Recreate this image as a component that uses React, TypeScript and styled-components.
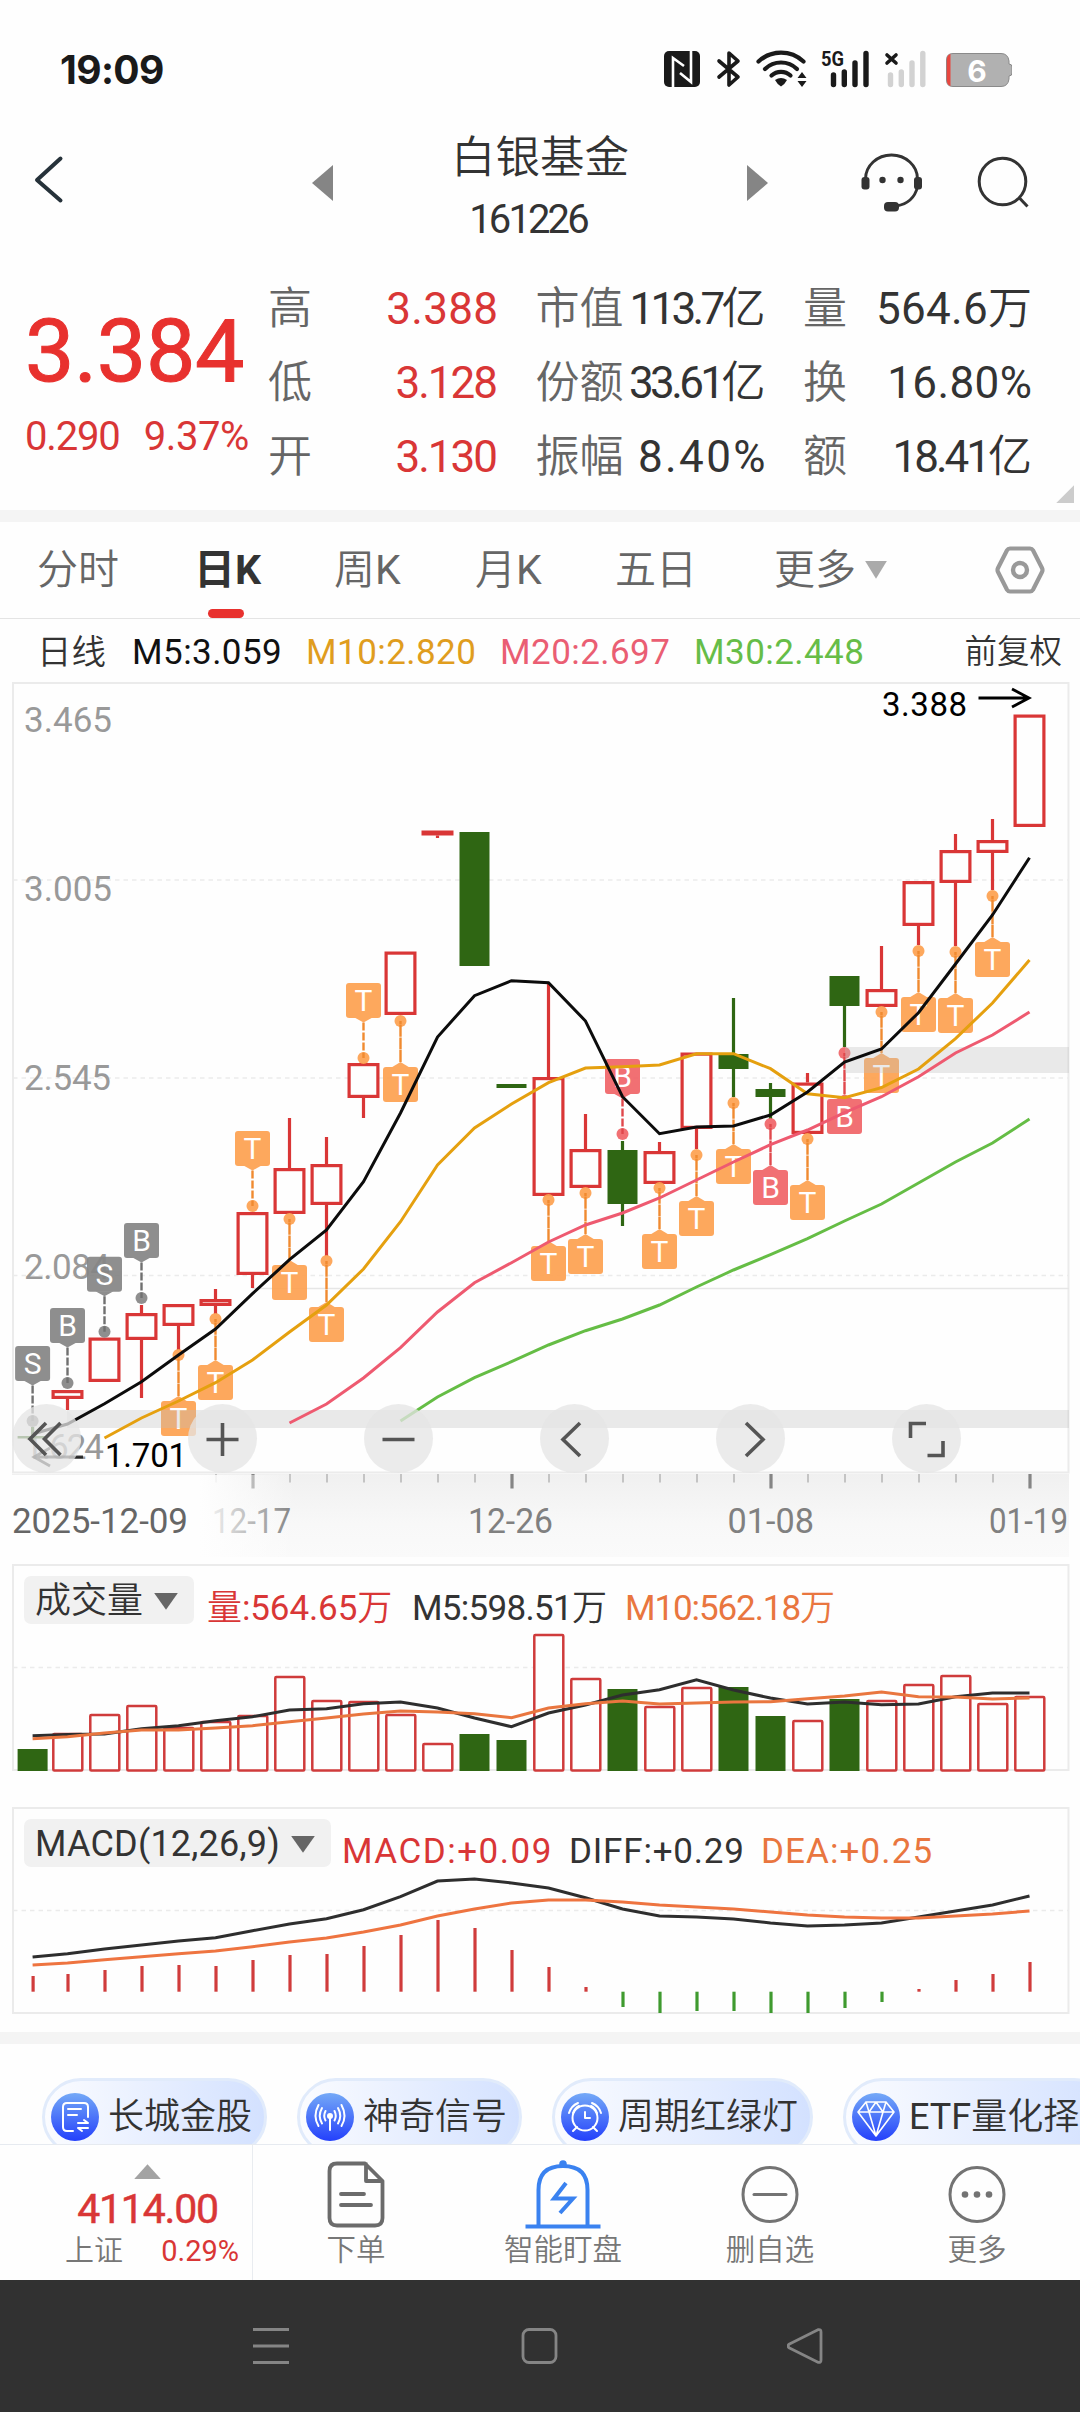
import React from "react";
import styled, { createGlobalStyle } from "styled-components";

const FONT = `Roboto, "Noto Sans CJK SC", sans-serif`;
const RED = "#d93636";
const GREEN = "#2f6613";
const PAPER = "#fefefe";

const GlobalStyle = createGlobalStyle`
  * { box-sizing: border-box; }
  body { margin: 0; background: ${PAPER}; font-family: ${FONT}; }
  svg { display: block; flex: none; }
`;

/* ---------- data ---------- */

type Candle = { up: boolean; top: number; bottom: number; high?: number; low?: number };
const up = (top: number, bottom: number, high?: number, low?: number): Candle => ({ up: true, top, bottom, high, low });
const down = (top: number, bottom: number, high?: number, low?: number): Candle => ({ up: false, top, bottom, high, low });

const candles: Candle[] = [
  down(1436, 1438.5, 1427, 1441), up(1390, 1399, undefined, 1410), up(1337.5, 1382), up(1313, 1340, 1305, 1398),
  up(1304, 1326, undefined, 1350), up(1299, 1306, 1289, 1314), up(1212, 1275, undefined, 1288), up(1168, 1214, 1118),
  up(1164, 1205, 1137, 1256), up(1063, 1098, undefined, 1118), up(951.5, 1015), up(830.5, 835.5, undefined, 838),
  down(832, 966), down(1084, 1088), up(1077, 1196, 983), up(1149, 1188, 1114),
  down(1150, 1204, 1141, 1226), up(1151, 1184, 1142), up(1052.5, 1129, undefined, 1149), down(1054, 1069, 998, 1097),
  down(1089, 1097, 1083, 1119), up(1082.5, 1134, 1073), down(976, 1006, undefined, 1047), up(989, 1007, 946),
  up(881, 926, undefined, 945), up(850, 883, 834, 946), up(840, 853, 819, 890), up(714.5, 827),
];

type Mark = { i: number; dot: number; text: "T" | "B" | "S"; above?: boolean; tone: "o" | "r" | "g" };
const marks: Mark[] = [
  { i: 0, dot: 1421, text: "S", above: true, tone: "g" },
  { i: 1, dot: 1383, text: "B", above: true, tone: "g" },
  { i: 2, dot: 1331.7, text: "S", above: true, tone: "g" },
  { i: 3, dot: 1298, text: "B", above: true, tone: "g" },
  { i: 4, dot: 1355, text: "T", tone: "o" },
  { i: 5, dot: 1319, text: "T", tone: "o" },
  { i: 6, dot: 1206, text: "T", above: true, tone: "o" },
  { i: 7, dot: 1219, text: "T", tone: "o" },
  { i: 8, dot: 1261, text: "T", tone: "o" },
  { i: 9, dot: 1058, text: "T", above: true, tone: "o" },
  { i: 10, dot: 1021, text: "T", tone: "o" },
  { i: 14, dot: 1200, text: "T", tone: "o" },
  { i: 15, dot: 1193, text: "T", tone: "o" },
  { i: 16, dot: 1134, text: "B", above: true, tone: "r" },
  { i: 17, dot: 1188, text: "T", tone: "o" },
  { i: 18, dot: 1155, text: "T", tone: "o" },
  { i: 19, dot: 1103, text: "T", tone: "o" },
  { i: 20, dot: 1124, text: "B", tone: "r" },
  { i: 21, dot: 1139, text: "T", tone: "o" },
  { i: 22, dot: 1053, text: "B", tone: "r" },
  { i: 23, dot: 1012, text: "T", tone: "o" },
  { i: 24, dot: 951, text: "T", tone: "o" },
  { i: 25, dot: 952, text: "T", tone: "o" },
  { i: 26, dot: 896, text: "T", tone: "o" },
];
const tones = {
  o: { fill: "#fda150", line: "#f08a30" },
  r: { fill: "#f06468", line: "#e0484c" },
  g: { fill: "#858585", line: "#707070" },
};

const ma5 = [1434, 1424, 1403.7, 1381.7, 1355, 1329, 1293.7, 1259.7, 1230, 1181.7, 1113, 1037, 995.7, 980.7, 982.7, 1021, 1096.7, 1133.7, 1127, 1126, 1115, 1092, 1062, 1049, 1012.7, 964, 915, 857.7];
const ma10 = [1438, 1418, 1401, 1382.7, 1360, 1332, 1305, 1269, 1221.7, 1165, 1128, 1104, 1082.7, 1068, 1066.7, 1065, 1053.7, 1053.7, 1068.7, 1093.7, 1097.7, 1087.7, 1069, 1038.7, 1003, 960];
const ma20 = [1423, 1404, 1378, 1347.7, 1312, 1282.7, 1262.7, 1242, 1225, 1213, 1198, 1180, 1162, 1144.7, 1130, 1112.7, 1096.7, 1076.7, 1053, 1035, 1012];
const ma30 = [1421, 1397, 1377.7, 1361.7, 1345, 1330.7, 1319, 1305, 1287, 1270, 1254.7, 1238.7, 1221, 1204, 1183, 1162, 1143, 1119];

const volTops = [1749, 1734, 1715, 1706, 1728, 1722, 1716, 1677, 1701, 1702, 1715, 1744, 1734, 1740, 1635, 1679, 1689, 1707, 1688, 1687, 1716, 1721, 1699, 1701, 1685, 1676, 1704, 1697];
const vol5 = [1735.7, 1734.5, 1734, 1728.7, 1725.7, 1720.7, 1716.7, 1710, 1708.7, 1703.7, 1702, 1708, 1718, 1726.7, 1713, 1705, 1695, 1689.7, 1679.7, 1690, 1698, 1704, 1702, 1704.7, 1704, 1696.7, 1693, 1693];
const vol10 = [1738.7, 1736.7, 1733, 1730, 1730, 1728, 1725.7, 1721.7, 1718, 1714, 1711, 1712, 1713.7, 1717.7, 1708, 1703.7, 1701, 1704, 1703, 1702, 1701.7, 1698.7, 1696, 1692, 1696.7, 1697, 1699, 1698];

const macd = [1976, 1974, 1970, 1966, 1965, 1966, 1960, 1955, 1954, 1946, 1935, 1920, 1928, 1950, 1967, 1987, 2007, 2013, 2011, 2011, 2013, 2013, 2008, 2002, 1989, 1980, 1974, 1962];
const diff = [1957, 1953.7, 1949, 1945, 1941, 1937.7, 1930.7, 1924, 1918.7, 1909.7, 1896.7, 1881, 1879, 1883, 1888, 1897.7, 1909, 1916, 1917, 1919, 1923, 1926, 1925, 1923, 1917, 1911, 1905, 1896];
const dea = [1965, 1963, 1959.7, 1956.7, 1953.7, 1951, 1946.7, 1942, 1938, 1932, 1925, 1916, 1909, 1903, 1900, 1900, 1902, 1905, 1907, 1909, 1912, 1915, 1917, 1918, 1918, 1916, 1914, 1911];

const xAt = (i: number) => (i === 0 ? 32.6 : 30.5 + 37 * i);
const points = (ys: number[]) => ys.map((y, k) => `${xAt(k + 28 - ys.length)},${y}`).join(" ");

/* ---------- layout ---------- */

const Screen = styled.main`
  width: 1080px;
  height: 2412px;
  display: flex;
  flex-direction: column;
  overflow: hidden;
  background: ${PAPER};
  color: #333;
`;

const StatusBar = styled.div`
  height: 120px;
  padding: 18px 68px 0 60px;
  display: flex;
  align-items: center;
  justify-content: space-between;
`;
const Clock = styled.span`
  margin-top: 2px;
  font: 700 39px/46px Inter, sans-serif;
  letter-spacing: -0.6px;
  color: #1a1a1a;
`;

const Header = styled.header`
  height: 122px;
  display: grid;
  grid-template-columns: 312px 21px 414px 21px 91px 60px 1fr;
  grid-template-rows: 122px;
  align-items: center;
`;
const BackBox = styled.div`
  padding-left: 32px;
`;
const SearchBox = styled.div`
  padding-left: 56px;
`;
const TitleStack = styled.div`
  display: flex;
  flex-direction: column;
  align-items: center;
  margin-top: 17px;
  line-height: 62px;
`;
const Title = styled.span`
  font-size: 44.5px;
  font-weight: 350;
`;
const Code = styled.span`
  font-size: 40px;
  letter-spacing: -2.9px;
  padding-right: 24px;
`;

const Quote = styled.section`
  height: 269px;
  display: flex;
`;
const PriceBlock = styled.div`
  width: 268px;
  padding: 63px 0 0 25px;
  display: flex;
  flex-direction: column;
  color: #e8312e;
`;
const Price = styled.span`
  font: 400 88px/92px ${FONT};
  letter-spacing: -0.4px;
  -webkit-text-stroke: 1px #e8312e;
`;
const Change = styled.div`
  display: flex;
  justify-content: space-between;
  width: 224px;
  margin-top: 17px;
  font-size: 40px;
  line-height: 46px;
  letter-spacing: -1.2px;
  color: ${RED};
`;
const ChangeRate = styled.span`
  letter-spacing: -0.4px;
`;
const QuoteGrid = styled.div`
  display: grid;
  grid-template-columns: 230px 230px 229px;
  column-gap: 37.5px;
  grid-auto-rows: 74px;
  padding-top: 30px;
  height: 252px;
`;
const QuoteCell = styled.div`
  display: flex;
  justify-content: space-between;
  line-height: 74px;
  white-space: nowrap;
`;
const QuoteLabel = styled.span`
  font-size: 44px;
  font-weight: 350;
  color: #666;
  margin-right: -4px;
`;
const QuoteValue = styled.span<{ $red?: boolean; $track?: number }>`
  font-size: 44px;
  font-weight: 400;
  letter-spacing: ${(p) => p.$track ?? 0}px;
  margin-right: ${(p) => -(p.$track ?? 0)}px;
  color: ${(p) => (p.$red ? RED : "#333")};
`;
const Unit = styled.span`
  font-weight: 350;
`;
const Corner = styled.div`
  align-self: flex-end;
  width: 18px;
  height: 18px;
  margin: 0 6px 7px auto;
  background: #ccc;
  clip-path: polygon(100% 0, 100% 100%, 0 100%);
`;

const Divider = styled.div`
  height: 12px;
  flex: none;
  background: #f4f4f4;
`;

const Tabs = styled.nav`
  height: 97px;
  display: grid;
  grid-template-columns: 37px 157px 140px 141px 140px 159px 221px 1fr;
  border-bottom: 1px solid #e4e4e4;
  font-size: 41px;
`;
const Tab = styled.div<{ $active?: boolean; $col?: number }>`
  grid-column: ${(p) => p.$col ?? "auto"};
  display: flex;
  flex-direction: column;
  height: 96px;
  font-weight: ${(p) => (p.$active ? 700 : 350)};
  color: ${(p) => (p.$active ? "#333" : "#666")};
`;
const TabLabel = styled.span`
  height: 87px;
  display: flex;
  align-items: center;
  padding-top: 8px;
  line-height: 60px;
`;
const Latin = styled.span`
  font-weight: 400;
`;
const TabMark = styled.div`
  width: 36px;
  height: 9px;
  margin-left: 14px;
  border-radius: 5px;
  background: #e8312e;
`;
const DownTri = styled.i<{ $w: number; $h: number; $c: string; $ml?: number }>`
  width: ${(p) => p.$w}px;
  height: ${(p) => p.$h}px;
  margin-left: ${(p) => p.$ml ?? 0}px;
  background: ${(p) => p.$c};
  clip-path: polygon(0 0, 100% 0, 50% 100%);
`;

const Legend = styled.div`
  height: 63px;
  display: flex;
  padding: 0 18px 0 37px;
  line-height: 67px;
  font-size: 35px;
  white-space: nowrap;
`;
const LegendItem = styled.span<{ $c: string; $w?: number; $thin?: boolean }>`
  width: ${(p) => (p.$w ? `${p.$w}px` : "auto")};
  color: ${(p) => p.$c};
  font-size: ${(p) => (p.$thin ? 34.5 : 35)}px;
  font-weight: ${(p) => (p.$thin ? 350 : 400)};
  letter-spacing: ${(p) => (p.$thin ? 0 : 0.45)}px;
`;
const Adjust = styled.span`
  margin-left: auto;
  font-size: 32.5px;
  font-weight: 350;
`;

const PriceArea = styled.section`
  position: relative;
  height: 882px;
`;
const ChartButtons = styled.div`
  position: absolute;
  left: 12px;
  top: 722px;
  display: flex;
  gap: 107px;
`;
const RoundButton = styled.button`
  width: 69px;
  height: 69px;
  padding: 0;
  border: 0;
  border-radius: 50%;
  background: rgba(229, 229, 229, 0.76);
`;

const IndicatorPanel = styled.section<{ $h: number; $gap: number }>`
  position: relative;
  height: ${(p) => p.$h}px;
  margin-bottom: ${(p) => p.$gap}px;
`;
const IndicatorHead = styled.div`
  position: absolute;
  left: 24px;
  top: 12px;
  display: flex;
  align-items: flex-start;
  white-space: nowrap;
  font-size: 35px;
`;
const Picker = styled.div<{ $w: number; $latin?: boolean }>`
  width: ${(p) => p.$w}px;
  height: 48px;
  padding: 2px 16px 0 11px;
  display: flex;
  align-items: center;
  justify-content: space-between;
  border-radius: 7px;
  background: #f1f1f1;
  font-size: 36px;
  font-weight: ${(p) => (p.$latin ? 400 : 350)};
  letter-spacing: ${(p) => (p.$latin ? 0.2 : 0)}px;
  line-height: 48px;
`;
const Reading = styled.span<{ $c: string; $w?: number; $track?: number; $ml?: number }>`
  margin-left: ${(p) => p.$ml ?? 0}px;
  width: ${(p) => (p.$w ? `${p.$w}px` : "auto")};
  padding-top: 7px;
  line-height: 52px;
  color: ${(p) => p.$c};
  letter-spacing: ${(p) => p.$track ?? 0}px;
`;

const Chips = styled.section`
  height: 100px;
  padding: 34px 0 0 42px;
  display: flex;
  gap: 30px;
  overflow: hidden;
`;
const Chip = styled.div<{ $w: number }>`
  flex: none;
  width: ${(p) => p.$w}px;
  height: 78px;
  padding-left: 6px;
  display: flex;
  align-items: center;
  gap: 9px;
  border: 3px solid #e1ebfb;
  border-radius: 39px;
  background: linear-gradient(90deg, #fbfcff, #d3e1ff);
  font-size: 36px;
  font-weight: 350;
  white-space: nowrap;
`;
const ChipLabel = styled.span`
  line-height: 44px;
  margin-bottom: 1px;
`;

const BottomBar = styled.footer`
  height: 136px;
  display: grid;
  grid-template-columns: 253px repeat(4, 207px);
  border-top: 1px solid #e6eaf0;
  background: ${PAPER};
`;
const IndexCell = styled.div`
  display: flex;
  flex-direction: column;
  align-items: center;
  padding-top: 19px;
  padding-left: 43px;
  border-right: 1px solid #e9ecf0;
  color: ${RED};
`;
const UpTri = styled.i`
  width: 27px;
  height: 15px;
  background: #a3a3a3;
  clip-path: polygon(50% 0, 100% 100%, 0 100%);
`;
const IndexPrice = styled.span`
  font-size: 41px;
  line-height: 46px;
  margin-top: 7px;
  letter-spacing: -1.2px;
  -webkit-text-stroke: 0.5px ${RED};
`;
const IndexRow = styled.div`
  width: 174px;
  margin: -1px -9px 0 0;
  display: flex;
  justify-content: space-between;
  font-size: 29px;
  line-height: 40px;
`;
const IndexName = styled.span`
  font-weight: 350;
  color: #777;
`;
const Action = styled.div`
  display: flex;
  flex-direction: column;
  align-items: center;
  padding-top: 14px;
  padding-right: 1px;
  font-size: 29.5px;
  font-weight: 350;
  line-height: 40px;
  color: #777;
`;

const SystemNav = styled.div`
  height: 132px;
  flex: none;
  display: flex;
  align-items: center;
  padding-left: 252px;
  gap: 229.5px;
  background: #313131;
`;

/* ---------- icons ---------- */

const StatusIcons = () => (
  <svg width="350" height="64" viewBox="662 38 350 64">
    <rect x="664" y="52" width="36" height="36" rx="5" fill="#1a1a1a" />
    <path d="M673 88V59L684 67M691 52V83L680 74" fill="none" stroke="#fff" strokeWidth="2.6" />
    <path d="M719 62L738 78L729 86V54L738 62L719 78" fill="none" stroke="#1a1a1a" strokeWidth="3.6" strokeLinejoin="round" strokeLinecap="round" />
    <g fill="none" stroke="#1a1a1a" strokeWidth="4.2" strokeLinecap="round">
      <path d="M758.500 62.500A33 33 0 0 1 803.500 62.500" />
      <path d="M765 70A23 23 0 0 1 797 70" />
      <path d="M771.500 76.500A14 14 0 0 1 790.500 76.500" />
    </g>
    <path d="M775 81Q781 77 787 81Q785 85 781 87.500Q777 85 775 81Z" fill="#1a1a1a" />
    <path d="M797.500 79L802 73L806.500 79ZM797.500 82L802 88L806.500 82Z" fill="#1a1a1a" />
    <text x="821" y="67" fontFamily="Roboto" fontWeight="700" fontSize="21" textLength="23" lengthAdjust="spacingAndGlyphs" fill="#1a1a1a">5G</text>
    <path d="M833.500 76V85.500M844.300 73V85.500M855 64V85.500M866 54.500V85.500" stroke="#1a1a1a" strokeWidth="5.400" strokeLinecap="round" />
    <path d="M887 56L896 64M896 56L887 64" stroke="#1a1a1a" strokeWidth="3.600" strokeLinecap="round" />
    <path d="M890.500 76V85.500M901.300 73V85.500M912 64V85.500M922.800 54.500V85.500" stroke="#d2d2d2" strokeWidth="5.400" strokeLinecap="round" />
    <path d="M953 54.500H1001Q1008 54.500 1009 62V65Q1012 65 1012 68V74Q1012 77 1009 77V80Q1008 87.500 1001 87.500H953Q946.500 87.500 946.500 81V61Q946.500 54.500 953 54.500Z" fill="#b1b1b1" stroke="#8a8a8a" />
    <path d="M950.500 55Q946.800 56 946.800 61V81Q946.800 86 950.500 87Z" fill="#e8463f" />
    <text x="977" y="82.500" textAnchor="middle" fontFamily="Inter" fontWeight="700" fontSize="30" fill="#fff">6</text>
  </svg>
);

const BackIcon = () => (
  <svg width="32" height="52" viewBox="32 155 32 52">
    <path d="M60.500 158.500L37 180L60.500 200.500" fill="none" stroke="#26323a" strokeWidth="4" strokeLinecap="round" strokeLinejoin="round" />
  </svg>
);
const SideTriSvg = styled.svg`
  margin-top: 4px;
`;
const SideTri = ({ left }: { left?: boolean }) => (
  <SideTriSvg width="21" height="36" viewBox="0 0 21 36">
    <path d={left ? "M21 0V36L0 18Z" : "M0 0V36L21 18Z"} fill="#858585" />
  </SideTriSvg>
);
const HeadsetIcon = () => (
  <svg width="64" height="62" viewBox="859.500 150 64 62">
    <path d="M866 179A26 24 0 0 1 918 179M918 187Q914 203 897 206" fill="none" stroke="#333" strokeWidth="2.900" />
    <rect x="862" y="177" width="8" height="12.500" rx="3" fill="#333" />
    <rect x="914.500" y="177" width="8" height="12.500" rx="3" fill="#333" />
    <circle cx="883" cy="180" r="3.200" fill="#333" />
    <circle cx="901" cy="180" r="3.200" fill="#333" />
    <rect x="884.500" y="202" width="15" height="9.500" rx="4" fill="#333" />
  </svg>
);
const SearchIcon = () => (
  <svg width="56" height="56" viewBox="974 153 56 56">
    <circle cx="1001.500" cy="181.500" r="23.300" fill="none" stroke="#333" strokeWidth="3" />
    <path d="M1018 197.500L1026.500 206.500" stroke="#333" strokeWidth="3" />
  </svg>
);
const HexIcon = () => (
  <svg width="50" height="48" viewBox="0 0 50 48">
    <path d="M15 2.500H35Q37 2.500 38 4.200L47 22Q48 24 47 26L38 43.800Q37 45.500 35 45.500H15Q13 45.500 12 43.800L3 26Q2 24 3 22L12 4.200Q13 2.500 15 2.500Z" fill="none" stroke="#999" strokeWidth="4.200" />
    <circle cx="25" cy="24" r="7" fill="none" stroke="#999" strokeWidth="4.400" />
  </svg>
);

const buttonPaths = [
  "M34 19L18 35L34 51M48.500 19L32.500 35L48.500 51",
  "M18.500 35.500H50.500M34.500 19V52",
  "M18.500 35.500H50.500",
  "M40 19L23 35.500L40 52",
  "M30 19L47 35.500L30 52",
  "M18.500 34V19.500H34M51 37V51.500H35.500",
];

const ChipIcon = ({ id, children }: { id: string; children: React.ReactNode }) => (
  <svg width="48" height="48" viewBox="0 0 48 48">
    <defs>
      <linearGradient id={id} x1="0" y1="0" x2="0" y2="1">
        <stop offset="0" stopColor="#74a9f7" />
        <stop offset="1" stopColor="#2440fb" />
      </linearGradient>
    </defs>
    <circle cx="24" cy="24" r="24" fill={`url(#${id})`} />
    <g fill="none" stroke="#fff" strokeWidth="2" strokeLinecap="round" strokeLinejoin="round">{children}</g>
  </svg>
);

/* ---------- charts ---------- */

const Line = ({ ys, color }: { ys: number[]; color: string }) => (
  <polyline points={points(ys)} fill="none" stroke={color} strokeWidth="3" />
);

const Frame = ({ top, bottom, grid }: { top: number; bottom: number; grid: number[] }) => (
  <g fill="none" stroke="#ebebeb">
    <rect x="13" y={top} width="1055.500" height={bottom - top} strokeWidth="2" />
    {grid.map((y) => (
      <path key={y} d={`M13 ${y}H1069`} strokeWidth="1.600" strokeDasharray="4.500 4" />
    ))}
  </g>
);

const CandleShape = ({ c, i }: { c: Candle; i: number }) => {
  const x = xAt(i);
  const color = c.up ? RED : GREEN;
  return (
    <g>
      {c.high !== undefined && <path d={`M${x} ${c.high}V${c.top}`} stroke={color} strokeWidth="3.200" />}
      {c.low !== undefined && <path d={`M${x} ${c.bottom}V${c.low}`} stroke={color} strokeWidth="3.200" />}
      {c.up ? (
        <rect x={x - 14.4} y={c.top + 1.6} width="28.800" height={c.bottom - c.top - 3.2} fill={PAPER} stroke={color} strokeWidth="3.200" />
      ) : (
        <rect x={x - 15} y={c.top} width="30" height={c.bottom - c.top} fill={color} />
      )}
    </g>
  );
};

const MarkShape = ({ m }: { m: Mark }) => {
  const x = xAt(m.i);
  const { fill, line } = tones[m.tone];
  const top = m.above ? m.dot - 75 : m.dot + 46;
  const tip = m.above ? top + 39.5 : top - 5;
  const base = m.above ? top + 34.5 : top + 0.5;
  return (
    <g>
      <g opacity="0.92" fill={fill}>
        <rect x={x - 17.5} y={top} width="35" height="35" rx="3" />
        <path d={`M${x - 9} ${base}L${x} ${tip}L${x + 9} ${base}Z`} />
        <circle cx={x} cy={m.dot} r="6" />
      </g>
      <path d={`M${x} ${tip}V${m.dot}`} stroke={line} strokeWidth="2.400" strokeDasharray={m.above ? "8 2" : "12 0.6"} />
      <text x={x} y={top + 28} textAnchor="middle" fontFamily="Roboto" fontSize="30" fill="#fff">
        {m.text}
      </text>
    </g>
  );
};

const scale: [string, number, number][] = [
  ["3.465", 731.5, 88],
  ["3.005", 901, 88],
  ["2.545", 1090, 87],
  ["2.084", 1279, 86],
  ["1.624", 1459, 80],
];
const dates: [string, number, number][] = [["12-17", 212, 79], ["12-26", 468, 85], ["01-08", 727.5, 86.5], ["01-19", 989, 79]];

const PriceChart = () => (
  <svg width="1080" height="882" viewBox="0 682 1080 882" fontFamily="Roboto">
    <defs>
      <linearGradient id="axisShade" x1="0" y1="0" x2="0" y2="1">
        <stop offset="0" stopColor="#f0f0f0" />
        <stop offset="0.6" stopColor="#f8f8f8" />
        <stop offset="1" stopColor="#fafafa" />
      </linearGradient>
      <linearGradient id="axisFade">
        <stop offset="0" stopColor={PAPER} />
        <stop offset="0.66" stopColor={PAPER} />
        <stop offset="1" stopColor={PAPER} stopOpacity="0" />
      </linearGradient>
    </defs>
    <rect x="12" y="1474" width="1057" height="83" fill="url(#axisShade)" />
    {candles.map((_, i) =>
      i < 5 ? null : i % 7 === 6 ? (
        <path key={i} d={`M${xAt(i) + 0.5} 1474V1488.500`} stroke="#858585" strokeWidth="3.200" />
      ) : (
        <path key={i} d={`M${xAt(i) + 0.5} 1474V1482.500`} stroke="#c4c4c4" strokeWidth="2" />
      )
    )}
    {dates.map(([d, x, w]) => (
      <text key={d} x={x} y="1533" fontSize="35" textLength={w} lengthAdjust="spacingAndGlyphs" fill="#808080">{d}</text>
    ))}
    <rect x="12" y="1475" width="284" height="82" fill="url(#axisFade)" />
    <text x="12" y="1533" fontSize="35" fill="#666" textLength="176">2025-12-09</text>

    <Frame top={683} bottom={1472.5} grid={[880, 1078, 1275.5]} />
    <path d="M252 1288.500H1069" stroke="#e6e6e6" strokeWidth="1.300" />
    {scale.map(([t, y, w]) => (
      <text key={t} x="24" y={y} fontSize="35" textLength={w} fill="#999">{t}</text>
    ))}
    {candles.map((c, i) => <CandleShape key={i} c={c} i={i} />)}
    {marks.map((m) => <MarkShape key={m.i} m={m} />)}
    <rect x="67" y="1410" width="1002" height="18" fill="#bebebe" fillOpacity="0.33" />
    <rect x="845" y="1047" width="224" height="26" fill="#bebebe" fillOpacity="0.33" />
    <Line ys={ma30} color="#65bd45" />
    <Line ys={ma20} color="#ee5a70" />
    <Line ys={ma10} color="#e5a00f" />
    <Line ys={ma5} color="#0c0c0c" />
    <g fill="none" stroke="#000" strokeWidth="2.800">
      <path d="M978.500 698H1029M1012 689L1029 698L1012 707" />
      <path d="M83 1457H34M50 1448L34 1457L50 1466" strokeOpacity="0.75" />
    </g>
    <text x="882" y="716" fontSize="33" textLength="85" fill="#000">3.388</text>
    <text x="105" y="1467" fontSize="33" textLength="82" fill="#000">1.701</text>
  </svg>
);

const VolumeChart = () => (
  <svg width="1080" height="208" viewBox="0 1564 1080 208">
    <Frame top={1565} bottom={1770} grid={[1667.5]} />
    {volTops.map((y, i) =>
      candles[i].up ? (
        <rect key={i} x={xAt(i) - 14.2} y={y} width="29" height={1770.5 - y} rx="1" fill={PAPER} stroke="#cf3b3b" strokeWidth="2.500" />
      ) : (
        <rect key={i} x={xAt(i) - 15} y={y} width="30" height={1771 - y} fill={GREEN} />
      )
    )}
    <Line ys={vol5} color="#2e2e2e" />
    <Line ys={vol10} color="#e9763f" />
  </svg>
);

const MacdChart = () => (
  <svg width="1080" height="208" viewBox="0 1807 1080 208">
    <Frame top={1808} bottom={2013} grid={[1910.5]} />
    {macd.map((y, i) => (
      <path key={i} d={`M${xAt(i) + 0.5} 1991.700V${y}`} stroke={y > 1992 ? "#3f9a2f" : "#d03c3c"} strokeWidth="3.200" />
    ))}
    <Line ys={diff} color="#2e2e2e" />
    <Line ys={dea} color="#ee7440" />
  </svg>
);

/* ---------- app ---------- */

type QuoteItem = { label: string; value: string; unit?: string; red?: boolean; track?: number };
const quotes: QuoteItem[] = [
  { label: "高", value: "3.388", red: true, track: 0.3 },
  { label: "市值", value: "113.7", unit: "亿", track: -3.7 },
  { label: "量", value: "564.6", unit: "万", track: 0.3 },
  { label: "低", value: "3.128", red: true, track: -2 },
  { label: "份额", value: "33.61", unit: "亿", track: -3.6 },
  { label: "换", value: "16.80%", track: 0.4 },
  { label: "开", value: "3.130", red: true, track: -2 },
  { label: "振幅", value: "8.40%", track: 2.4 },
  { label: "额", value: "18.41", unit: "亿", track: -3 },
];

export default function App() {
  return (
    <Screen>
      <GlobalStyle />
      <StatusBar>
        <Clock>19:09</Clock>
        <StatusIcons />
      </StatusBar>
      <Header>
        <BackBox><BackIcon /></BackBox>
        <SideTri left />
        <TitleStack>
          <Title>白银基金</Title>
          <Code>161226</Code>
        </TitleStack>
        <SideTri />
        <span />
        <HeadsetIcon />
        <SearchBox><SearchIcon /></SearchBox>
      </Header>

      <Quote>
        <PriceBlock>
          <Price>3.384</Price>
          <Change><span>0.290</span><ChangeRate>9.37%</ChangeRate></Change>
        </PriceBlock>
        <QuoteGrid>
          {quotes.map((q) => (
            <QuoteCell key={q.label}>
              <QuoteLabel>{q.label}</QuoteLabel>
              <QuoteValue $red={q.red} $track={q.track}>
                {q.value}
                {q.unit && <Unit>{q.unit}</Unit>}
              </QuoteValue>
            </QuoteCell>
          ))}
        </QuoteGrid>
        <Corner />
      </Quote>
      <Divider />

      <Tabs>
        <Tab $col={2}><TabLabel>分时</TabLabel></Tab>
        <Tab $active><TabLabel>日K</TabLabel><TabMark /></Tab>
        <Tab><TabLabel>周<Latin>K</Latin></TabLabel></Tab>
        <Tab><TabLabel>月<Latin>K</Latin></TabLabel></Tab>
        <Tab><TabLabel>五日</TabLabel></Tab>
        <Tab><TabLabel>更多<DownTri $w={22} $h={18} $c="#aaa" $ml={9} /></TabLabel></Tab>
        <Tab><TabLabel><HexIcon /></TabLabel></Tab>
      </Tabs>

      <Legend>
        <LegendItem $c="#333" $w={95} $thin>日线</LegendItem>
        <LegendItem $c="#111" $w={174}>M5:3.059</LegendItem>
        <LegendItem $c="#e09d1e" $w={194}>M10:2.820</LegendItem>
        <LegendItem $c="#ea5e73" $w={194}>M20:2.697</LegendItem>
        <LegendItem $c="#66bd48">M30:2.448</LegendItem>
        <Adjust>前复权</Adjust>
      </Legend>

      <PriceArea>
        <PriceChart />
        <ChartButtons>
          {buttonPaths.map((d) => (
            <RoundButton key={d}>
              <svg width="69" height="69" viewBox="0 0 69 69">
                <path d={d} fill="none" stroke="#555" strokeWidth="3.600" />
              </svg>
            </RoundButton>
          ))}
        </ChartButtons>
      </PriceArea>

      <IndicatorPanel $h={208} $gap={35}>
        <VolumeChart />
        <IndicatorHead>
          <Picker $w={170}>成交量<DownTri $w={24} $h={17} $c="#666" /></Picker>
          <Reading $c={RED} $ml={13} $w={205} $track={-0.1}><Unit>量</Unit>:564.65<Unit>万</Unit></Reading>
          <Reading $c="#333" $w={213} $track={-0.7}>M5:598.51<Unit>万</Unit></Reading>
          <Reading $c="#e9763f" $track={-1.1}>M10:562.18<Unit>万</Unit></Reading>
        </IndicatorHead>
      </IndicatorPanel>

      <IndicatorPanel $h={208} $gap={17}>
        <MacdChart />
        <IndicatorHead>
          <Picker $w={307} $latin>MACD(12,26,9)<DownTri $w={24} $h={17} $c="#666" /></Picker>
          <Reading $c={RED} $ml={11} $w={227} $track={1.5}>MACD:+0.09</Reading>
          <Reading $c="#333" $w={192} $track={0.8}>DIFF:+0.29</Reading>
          <Reading $c="#e9763f" $track={1.1}>DEA:+0.25</Reading>
        </IndicatorHead>
      </IndicatorPanel>

      <Divider />
      <Chips>
        <Chip $w={225}>
          <ChipIcon id="chipDoc">
            <path d="M22 38H16Q12 38 12 34V14Q12 10 16 10H33Q37 10 37 14V24M17 16H30M17 22H26M27 30H37L33 27M37 35H27L31 38" />
          </ChipIcon>
          <ChipLabel>长城金股</ChipLabel>
        </Chip>
        <Chip $w={225}>
          <ChipIcon id="chipSignal">
            <circle cx="24" cy="23" r="2" fill="#fff" />
            <path d="M24 24V37M19.500 27.500Q17 23 19.500 18M28.500 27.500Q31 23 28.500 18M16 30.500Q11.500 23 16 15M32 30.500Q36.500 23 32 15M12.500 33Q6.500 23 12.500 12M35.500 33Q41.500 23 35.500 12" />
          </ChipIcon>
          <ChipLabel>神奇信号</ChipLabel>
        </Chip>
        <Chip $w={261}>
          <ChipIcon id="chipAlarm">
            <circle cx="24" cy="25" r="12.500" />
            <path d="M24 19V25H29M16 34L12 38M32 34L36 38M8 20Q10 13 17 10M40 20Q38 13 31 10M12 20Q14 15 18 13M36 20Q34 15 30 13" />
          </ChipIcon>
          <ChipLabel>周期红绿灯</ChipLabel>
        </Chip>
        <Chip $w={270}>
          <ChipIcon id="chipGem">
            <path d="M14 9H34L42 19L24 43L6 19ZM6 19H42M14 9L17 19L24 9L31 19L34 9M17 19L24 43L31 19" strokeWidth="1.600" />
          </ChipIcon>
          <ChipLabel><Latin>ETF</Latin>量化择时</ChipLabel>
        </Chip>
      </Chips>

      <BottomBar>
        <IndexCell>
          <UpTri />
          <IndexPrice>4114.00</IndexPrice>
          <IndexRow><IndexName>上证</IndexName><span>0.29%</span></IndexRow>
        </IndexCell>
        <Action>
          <svg width="76" height="71" viewBox="0 0 76 71">
            <path d="M19 4.500H47L64.500 22V59Q64.500 66.500 57 66.500H19Q11.500 66.500 11.500 59V12Q11.500 4.500 19 4.500M48 5V22H64M23 35H46M23 46H53" fill="none" stroke="#6b6b6b" strokeWidth="3.800" strokeLinecap="round" strokeLinejoin="round" />
          </svg>
          下单
        </Action>
        <Action>
          <svg width="76" height="71" viewBox="0 0 76 71">
            <path d="M0.500 67.500H75.500M13.500 66V31Q13.500 7 38 7Q62.500 7 62.500 31V66M41 24L29 39.500H48L35 54" fill="none" stroke="#3a82f0" strokeWidth="4" />
            <circle cx="38" cy="5" r="3.800" fill="#3a82f0" />
          </svg>
          智能盯盘
        </Action>
        <Action>
          <svg width="76" height="71" viewBox="0 0 76 71">
            <circle cx="38" cy="35.500" r="27" fill="none" stroke="#737373" strokeWidth="3" />
            <path d="M22 35.500H54" stroke="#737373" strokeWidth="3" strokeLinecap="round" />
          </svg>
          删自选
        </Action>
        <Action>
          <svg width="76" height="71" viewBox="0 0 76 71">
            <circle cx="38" cy="35.500" r="27" fill="none" stroke="#737373" strokeWidth="3" />
            <g fill="#737373">
              <circle cx="26" cy="35.500" r="3.300" />
              <circle cx="38" cy="35.500" r="3.300" />
              <circle cx="50" cy="35.500" r="3.300" />
            </g>
          </svg>
          更多
        </Action>
      </BottomBar>

      <SystemNav>
        <svg width="38" height="40" viewBox="0 0 38 40">
          <path d="M1 3.500H37M1 20H37M1 36.500H37" stroke="#858585" strokeWidth="3.200" />
        </svg>
        <svg width="38" height="40" viewBox="0 0 38 40">
          <rect x="3" y="3.500" width="33" height="33" rx="6" fill="none" stroke="#858585" strokeWidth="2.800" />
        </svg>
        <svg width="38" height="40" viewBox="0 0 38 40">
          <path d="M31 3.700L2.500 18Q-0.500 20 2.500 22L31 36.300Q34 37 34 34V6Q34 3 31 3.700Z" fill="none" stroke="#858585" strokeWidth="2.800" strokeLinejoin="round" />
        </svg>
      </SystemNav>
    </Screen>
  );
}
